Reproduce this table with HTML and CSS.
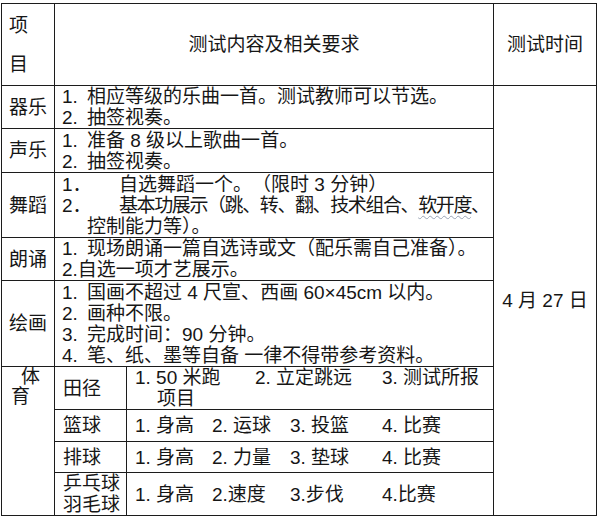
FILE: index.html
```html
<!DOCTYPE html>
<html lang="zh-CN">
<head>
<meta charset="utf-8">
<title>测试内容及相关要求</title>
<link rel="stylesheet" href="styles.css">
</head>
<body>
<table class="grid">
  <colgroup>
    <col class="c-label">
    <col class="c-sub">
    <col class="c-main">
    <col class="c-date">
  </colgroup>
  <tr class="r-head">
    <td class="label head-label">项<br>目</td>
    <td class="head" colspan="2">测试内容及相关要求</td>
    <td class="head">测试时间</td>
  </tr>
  <tr class="r-2a">
    <td class="label">器乐</td>
    <td class="body" colspan="2">
      <div><span class="n">1.</span>相应等级的乐曲一首。测试教师可以节选。</div>
      <div><span class="n">2.</span>抽签视奏。</div>
    </td>
    <td class="date" rowspan="9">4 月 27 日</td>
  </tr>
  <tr class="r-2b">
    <td class="label">声乐</td>
    <td class="body" colspan="2">
      <div><span class="n">1.</span>准备 8 级以上歌曲一首。</div>
      <div><span class="n">2.</span>抽签视奏。</div>
    </td>
  </tr>
  <tr class="r-3">
    <td class="label">舞蹈</td>
    <td class="body" colspan="2">
      <div class="full"><span class="n wide">1．</span>自选舞蹈一个。（限时 3 分钟）</div>
      <div><span class="n wide">2．</span><span class="tight">基本功展示（跳、转、翻、技术组合、<span class="spell">软开度</span>、</span></div>
      <div class="cont">控制能力等）。</div>
    </td>
  </tr>
  <tr class="r-2a">
    <td class="label">朗诵</td>
    <td class="body" colspan="2">
      <div><span class="n">1.</span>现场朗诵一篇自选诗或文（配乐需自己准备）。</div>
      <div>2.自选一项才艺展示。</div>
    </td>
  </tr>
  <tr class="r-4">
    <td class="label">绘画</td>
    <td class="body" colspan="2">
      <div><span class="n">1.</span>国画不超过 4 尺宣、西画 60×45cm 以内。</div>
      <div><span class="n">2.</span>画种不限。</div>
      <div><span class="n">3.</span>完成时间：90 分钟。</div>
      <div><span class="n">4.</span>笔、纸、墨等自备 一律不得带参考资料。</div>
    </td>
  </tr>
  <tr class="r-tj">
    <td class="label pe" rowspan="4"><span class="pe-1">体</span><br>育</td>
    <td class="sub">田径</td>
    <td class="body items">
      <div><span class="i w120">1. 50 米跑</span><span class="i w127">2. 立定跳远</span><span class="i">3. 测试所报</span></div>
      <div class="cont2">项目</div>
    </td>
  </tr>
  <tr class="r-lq">
    <td class="sub">篮球</td>
    <td class="body items">
      <div><span class="i w77">1. 身高</span><span class="i w78">2. 运球</span><span class="i w92">3. 投篮</span><span class="i">4. 比赛</span></div>
    </td>
  </tr>
  <tr class="r-pq">
    <td class="sub">排球</td>
    <td class="body items">
      <div><span class="i w77">1. 身高</span><span class="i w78">2. 力量</span><span class="i w92">3. 垫球</span><span class="i">4. 比赛</span></div>
    </td>
  </tr>
  <tr class="r-ppq">
    <td class="sub">乒乓球<br>羽毛球</td>
    <td class="body items">
      <div><span class="i w77">1. 身高</span><span class="i w78">2.速度</span><span class="i w92">3.步伐</span><span class="i">4.比赛</span></div>
    </td>
  </tr>
</table>
</body>
</html>
```

FILE: styles.css
```css
html, body {
  margin: 0;
  padding: 0;
  background: #ffffff;
}

body {
  padding: 3px 0 0 1px;
  font-family: "Liberation Sans", "Noto Sans CJK SC", sans-serif;
  font-size: 19px;
  color: #161616;
}

.grid {
  border-collapse: collapse;
  table-layout: fixed;
  width: 595px;
}

.c-label { width: 53px; }
.c-sub { width: 72px; }
.c-main { width: 367px; }
.c-date { width: 103px; }

.grid td {
  border: 1px solid #1c1c1c;
  padding: 0;
  line-height: 21px;
  vertical-align: middle;
  white-space: nowrap;
}

.r-head { height: 82px; }
.r-2a { height: 42px; }
.r-2b { height: 44px; }
.r-3 { height: 65px; }
.r-4 { height: 86px; }
.r-tj { height: 42px; }
.r-lq { height: 32px; }
.r-pq { height: 31px; }
.r-ppq { height: 43px; }

.label {
  padding-left: 7px !important;
  text-align: left;
}

.head-label {
  line-height: 39px !important;
}

.head {
  text-align: center;
}

.body {
  padding-left: 7px !important;
}

.n {
  display: inline-block;
  width: 25px;
}

.n.wide {
  width: 57px;
}

.full {
  text-spacing-trim: space-all;
}

.tight {
  letter-spacing: -1.4px;
}

.cont {
  padding-left: 25px;
}

.cont2 {
  padding-left: 22px;
}

.spell {
  text-decoration: underline wavy #9aa4b4;
  text-decoration-thickness: 1px;
  text-underline-offset: 3px;
}

.date {
  text-align: center;
}

.pe {
  vertical-align: top !important;
  line-height: 20px !important;
  padding-left: 9px !important;
}

.pe-1 {
  padding-left: 10px;
}

.sub {
  padding-left: 8px !important;
}

.items {
  padding-left: 8px !important;
}

.i {
  display: inline-block;
}

.w77 { width: 77px; }
.w78 { width: 78px; }
.w92 { width: 92px; }
.w120 { width: 120px; }
.w127 { width: 127px; }
```
